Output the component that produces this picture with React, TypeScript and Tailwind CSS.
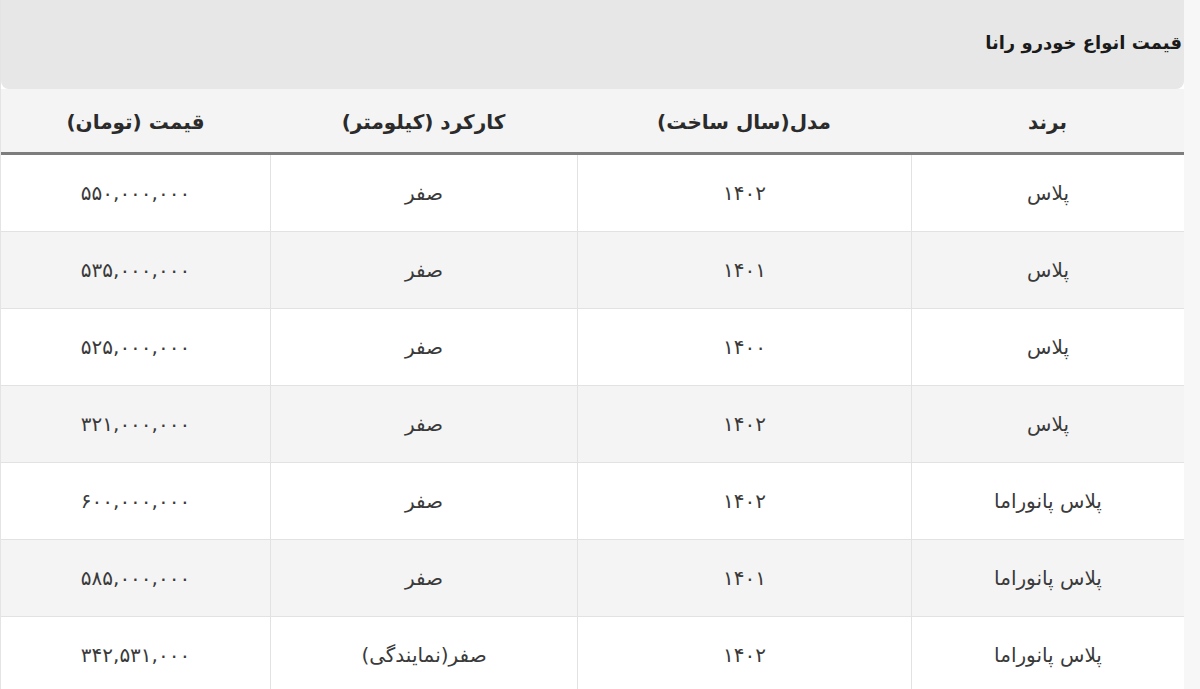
import React from "react";

const rows: [string, string, string, string][] = [
  ["پلاس", "۱۴۰۲", "صفر", "۵۵۰,۰۰۰,۰۰۰"],
  ["پلاس", "۱۴۰۱", "صفر", "۵۳۵,۰۰۰,۰۰۰"],
  ["پلاس", "۱۴۰۰", "صفر", "۵۲۵,۰۰۰,۰۰۰"],
  ["پلاس", "۱۴۰۲", "صفر", "۳۲۱,۰۰۰,۰۰۰"],
  ["پلاس پانوراما", "۱۴۰۲", "صفر", "۶۰۰,۰۰۰,۰۰۰"],
  ["پلاس پانوراما", "۱۴۰۱", "صفر", "۵۸۵,۰۰۰,۰۰۰"],
  ["پلاس پانوراما", "۱۴۰۲", "صفر(نمایندگی)", "۳۴۲,۵۳۱,۰۰۰"],
];

export default function App() {
  return (
    <div
      className="w-[1200px] h-[689px] overflow-hidden bg-[#f7f7f7] flex"
      style={{ fontFamily: '"DejaVu Sans", "Noto Sans", sans-serif' }}
    >
      <div dir="rtl" className="w-[1184px] h-full bg-white flex flex-col border-l border-[#e4e4e4]">
        <div className="h-[89px] shrink-0 bg-[#e7e7e7] rounded-b-[8px] flex items-center px-[2px] pb-[4px] text-[18px] font-bold text-[#1a1a1a]">
          قیمت انواع خودرو رانا
        </div>
        <div className="h-[2px] shrink-0 bg-[#f4f4f4]" />
        <div className="grid grid-cols-[273px_334px_307px_1fr] h-[64px] shrink-0 bg-[#f4f4f4] border-b-[3px] border-[#7d7d7d] text-[20px] font-bold text-[#2b2b2b]">
          <div className="flex items-center justify-center">برند</div>
          <div className="flex items-center justify-center">مدل(سال ساخت)</div>
          <div className="flex items-center justify-center">کارکرد (کیلومتر)</div>
          <div className="flex items-center justify-center">قیمت (تومان)</div>
        </div>
        {rows.map((r, i) => (
          <div
            key={i}
            className={
              "grid grid-cols-[273px_334px_307px_1fr] h-[77px] shrink-0 border-b border-[#e2e2e2] text-[20px] text-[#3a3a3a] " +
              (i % 2 === 1 ? "bg-[#f4f4f4]" : "bg-white")
            }
          >
            <div className="flex items-center justify-center border-l border-[#e2e2e2]">{r[0]}</div>
            <div className="flex items-center justify-center border-l border-[#e2e2e2]">{r[1]}</div>
            <div className="flex items-center justify-center border-l border-[#e2e2e2]">{r[2]}</div>
            <div className="flex items-center justify-center">{r[3]}</div>
          </div>
        ))}
      </div>
    </div>
  );
}
